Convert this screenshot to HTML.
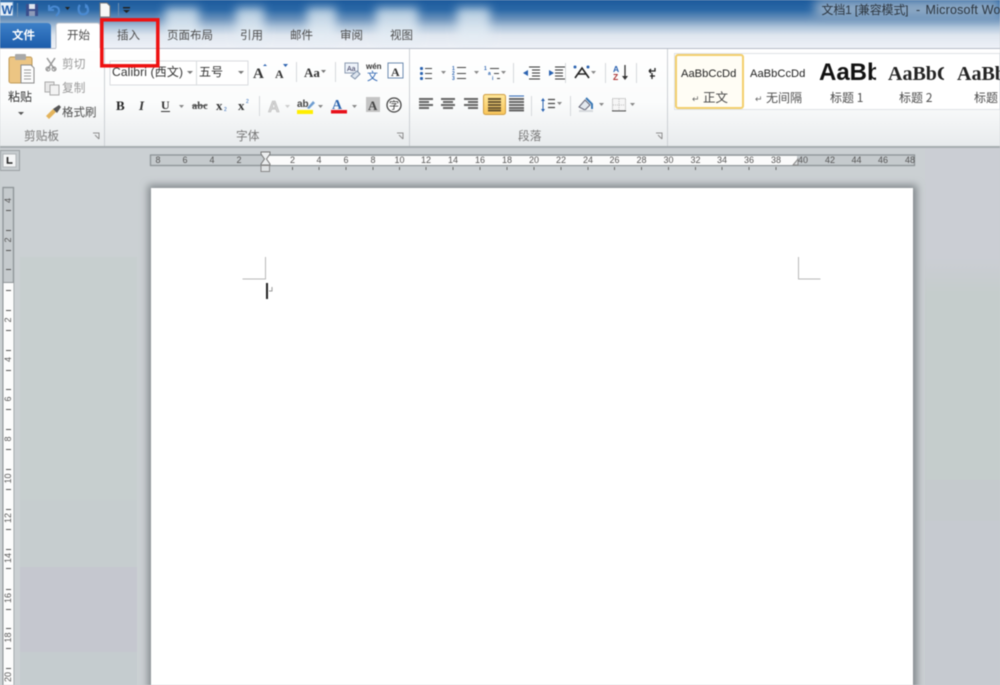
<!DOCTYPE html>
<html><head><meta charset="utf-8"><style>
html,body{margin:0;padding:0;background:#c9ced1}
svg{display:block}
#root{filter:blur(.4px)}
text{font-family:"Liberation Sans","Noto Sans CJK SC",sans-serif}
.s{font-family:"Noto Sans CJK SC","Liberation Sans",sans-serif;font-size:11.5px;fill:#4d4d4d}
.g{font-family:"Noto Sans CJK SC","Liberation Sans",sans-serif;font-size:11.7px;fill:#777}
.r{font-size:9px;fill:#555;text-anchor:middle}
</style></head><body>
<svg id="root" xmlns="http://www.w3.org/2000/svg" width="1000" height="685" viewBox="0 0 1000 685">
<defs>
<linearGradient id="top" x1="0" y1="0" x2="0" y2="1"><stop offset="0" stop-color="#1c5a9c"/><stop offset=".2" stop-color="#2b68a6"/><stop offset=".4" stop-color="#6f95bd"/><stop offset=".55" stop-color="#aec4da"/><stop offset=".72" stop-color="#dfe6ef"/><stop offset="1" stop-color="#eff2f8"/></linearGradient>
<linearGradient id="blob" x1="0" y1="0" x2="0" y2="1"><stop offset="0" stop-color="#b9d0e2"/><stop offset=".6" stop-color="#dfe9f2"/><stop offset="1" stop-color="#eaf0f6"/></linearGradient>
<linearGradient id="rib" x1="0" y1="0" x2="0" y2="1"><stop offset="0" stop-color="#fff"/><stop offset=".55" stop-color="#fbfcfc"/><stop offset="1" stop-color="#e8ebed"/></linearGradient>
<linearGradient id="file" x1="0" y1="0" x2="0" y2="1"><stop offset="0" stop-color="#3d80c8"/><stop offset="1" stop-color="#1c5cab"/></linearGradient>
<linearGradient id="act" x1="0" y1="0" x2="0" y2="1"><stop offset="0" stop-color="#ffe79a"/><stop offset="1" stop-color="#f9c65a"/></linearGradient>
<linearGradient id="trans" x1="0" y1="0" x2="0" y2="1"><stop offset="0" stop-color="#cbced4"/><stop offset="1" stop-color="#c5cdcc"/></linearGradient>
<filter id="b" x="-50%" y="-50%" width="200%" height="200%"><feGaussianBlur stdDeviation="5"/></filter>
<filter id="b2" x="-50%" y="-50%" width="200%" height="200%"><feGaussianBlur stdDeviation="5"/></filter>
<filter id="sh" x="-5%" y="-5%" width="110%" height="110%"><feGaussianBlur stdDeviation="4"/></filter>
</defs>

<!-- title area -->
<rect width="1000" height="49" fill="url(#top)"/>
<g filter="url(#b)" fill="url(#blob)" opacity=".95">
<rect x="165" y="8" width="34" height="36"/><rect x="236" y="8" width="28" height="36"/><rect x="307" y="8" width="29" height="36"/><rect x="376" y="8" width="42" height="36"/><rect x="457" y="8" width="33" height="36"/>
</g>
<rect x="815" y="0" width="185" height="18" fill="#8ea9c4" filter="url(#b2)"/>
<text x="821.500" y="14" font-size="12" fill="#2c3640" textLength="87" style="font-family:'Liberation Sans','Noto Sans CJK SC',sans-serif">文档1 [兼容模式]</text>
<text x="916" y="14" font-size="12.500" fill="#2c3640">-</text>
<text x="925.500" y="14" font-size="12.500" fill="#2c3640" textLength="75">Microsoft Wo</text>

<!-- QAT -->
<rect x="0" y="2" width="13" height="14" fill="#eaf1f8" stroke="#5c8fc4"/>
<text x="1.500" y="14" font-size="12" font-weight="bold" fill="#1d5aa8">W</text>
<rect x="17" y="3" width="1" height="14" fill="#6f8fb0"/>
<rect x="26" y="4" width="12" height="12" fill="#3b4f8c"/><rect x="29" y="4" width="6" height="5" fill="#dfe6f0"/><rect x="29" y="11" width="6" height="5" fill="#8d9ab8"/>
<path d="M49 5v5h5M50 9c3-4 9-3 9 2 0 2-1 3-3 5" fill="none" stroke="#4a8ad2" stroke-width="2"/>
<path d="M65 7h5l-2.500 3z" fill="#222"/>
<path d="M80 5c-2 2-2 7 1 9 3 1 6 0 7-3 0-3-1-5-2-6" fill="none" stroke="#4a8ad2" stroke-width="2.200"/><path d="M85 3v5h3z" fill="#4a8ad2"/>
<path d="M100 3h7l3 3v11h-10z" fill="#f8f8f6" stroke="#777"/>
<rect x="118" y="3" width="1" height="13" fill="#6f8fb0"/>
<rect x="123" y="7" width="7" height="1.500" fill="#222"/><path d="M123 10h7l-3.500 3z" fill="#222"/>

<!-- ribbon -->
<rect x="0" y="48" width="1000" height="98" fill="url(#rib)"/>
<rect x="0" y="48" width="1000" height="1" fill="#b7bcc8"/>
<rect x="0" y="146" width="1000" height="2" fill="#a7adb0"/>
<rect x="104" y="49" width="1" height="97" fill="#ccd0d4"/>
<rect x="409" y="49" width="1" height="97" fill="#ccd0d4"/>
<rect x="667" y="49" width="1" height="97" fill="#ccd0d4"/>

<!-- tabs -->
<path d="M0 23h47q4 0 4 4v21H0z" fill="url(#file)"/>
<text x="12" y="39" font-size="11.500" fill="#fff" font-weight="bold" style="font-family:'Noto Sans CJK SC',sans-serif">文件</text>
<path d="M56 49V26q0-3 3-3h38q3 0 3 3v23z" fill="#fff"/>
<path d="M56 48V26q0-3 3-3h38q3 0 3 3v22" fill="none" stroke="#bcc3cc"/>
<text x="67" y="39" class="s">开始</text>
<text x="117" y="39" class="s">插入</text>
<text x="167" y="39" class="s">页面布局</text>
<text x="240" y="39" class="s">引用</text>
<text x="290" y="39" class="s">邮件</text>
<text x="340" y="39" class="s">审阅</text>
<text x="390" y="39" class="s">视图</text>

<!-- clipboard -->
<rect x="9" y="57" width="23" height="26" rx="2" fill="#ecc583" stroke="#c09a58"/>
<rect x="15" y="54" width="11" height="6" rx="1" fill="#a8a8a8"/>
<path d="M21 65h10l3 3v15H21z" fill="#fdfdfd" stroke="#8a8a8a"/>
<path d="M24 70h7M24 73h7M24 76h7M24 79h7" stroke="#999"/>
<text x="8" y="101" class="s" style="font-size:12px;fill:#333">粘贴</text>
<path d="M18 112h6l-3 3z" fill="#555"/>
<path d="M47 58l8 12M55 58l-8 12" stroke="#999" stroke-width="1.500" fill="none"/><circle cx="48" cy="69" r="2" fill="none" stroke="#888"/><circle cx="54" cy="69" r="2" fill="none" stroke="#888"/>
<text x="62" y="68" class="g" style="fill:#9a9a9a">剪切</text>
<rect x="45" y="82" width="9" height="10" fill="#e8e8e8" stroke="#aaa"/><rect x="50" y="85" width="9" height="10" fill="#f3f3f3" stroke="#aaa"/>
<text x="62" y="92" class="g" style="fill:#9a9a9a">复制</text>
<path d="M46 116l7-7 3 3-7 7z" fill="#e3b45c"/><path d="M53 109l6-4 2 2-4 6z" fill="#555"/>
<text x="62" y="116" class="s">格式刷</text>
<text x="24" y="140" class="g">剪贴板</text>
<path d="M93 133h6v6M95 135l4 4" fill="none" stroke="#8e8e8e"/>

<!-- font group -->
<rect x="110" y="61" width="138" height="24" fill="#fff" stroke="#d9dcdf"/>
<rect x="196" y="61" width="1" height="24" fill="#d9dcdf"/>
<text x="112" y="76" font-size="12" fill="#333" textLength="71">Calibri (西文)</text>
<path d="M187 71h6l-3 3z" fill="#777"/>
<text x="199" y="76" font-size="12" fill="#333" style="font-family:'Noto Sans CJK SC',sans-serif">五号</text>
<path d="M238 71h6l-3 3z" fill="#777"/>
<text x="253" y="78" font-size="15" font-weight="bold" fill="#333" style="font-family:'Liberation Serif',serif">A</text><path d="M263 66l2-2 2 2z" fill="#2a62b0"/>
<text x="275" y="78" font-size="12" font-weight="bold" fill="#333" style="font-family:'Liberation Serif',serif">A</text><path d="M283 64h5l-2.500 3z" fill="#2a62b0"/>
<rect x="296" y="62" width="1" height="20" fill="#d6d9dc"/>
<text x="304" y="77" font-size="13" font-weight="bold" fill="#333" style="font-family:'Liberation Serif',serif">Aa</text><path d="M321 70h5l-2.500 3z" fill="#777"/>
<rect x="335" y="62" width="1" height="20" fill="#d6d9dc"/>
<text x="116" y="110" font-size="13" font-weight="bold" fill="#222" style="font-family:'Liberation Serif',serif">B</text>
<text x="139" y="110" font-size="13" font-weight="bold" font-style="italic" fill="#333" style="font-family:'Liberation Serif',serif">I</text>
<text x="161" y="109" font-size="12" font-weight="bold" fill="#333" style="font-family:'Liberation Serif',serif">U</text><rect x="161" y="111" width="9" height="1" fill="#333"/>
<path d="M179 105h5l-2.500 3z" fill="#888"/>
<text x="192" y="109" font-size="10.500" font-weight="bold" fill="#444" style="font-family:'Liberation Serif',serif">abc</text><rect x="192" y="105" width="15" height="1" fill="#555"/>
<text x="216" y="110" font-size="13" font-weight="bold" fill="#333" style="font-family:'Liberation Serif',serif">x</text><text x="224" y="111" font-size="5" fill="#2a62b0">2</text>
<text x="238" y="110" font-size="13" font-weight="bold" fill="#333" style="font-family:'Liberation Serif',serif">x</text><text x="246" y="103" font-size="5" fill="#2a62b0">2</text>
<rect x="259" y="96" width="1" height="20" fill="#d6d9dc"/>
<text x="268" y="112" font-size="16" font-weight="bold" fill="#d6d6d6" stroke="#bbb" stroke-width=".6">A</text><path d="M285 105h5l-2.500 3z" fill="#ccc"/>
<text x="297" y="107" font-size="10" font-weight="bold" fill="#444">ab</text><path d="M307 108l6-7 2 2-6 6z" fill="#6f9dd0"/>
<rect x="297" y="110" width="16" height="4" fill="#ffee00"/>
<path d="M318 105h5l-2.500 3z" fill="#888"/>
<text x="332" y="109" font-size="14" font-weight="bold" fill="#2b63ad" style="font-family:'Liberation Serif',serif">A</text>
<rect x="331" y="110" width="16" height="3.500" fill="#e8101a"/>
<path d="M352 105h5l-2.500 3z" fill="#888"/>
<rect x="366" y="97" width="14" height="15" fill="#c4c4c4"/>
<text x="368" y="110" font-size="13" font-weight="bold" fill="#444" style="font-family:'Liberation Serif',serif">A</text>
<circle cx="394" cy="105" r="7" fill="#fff" stroke="#444" stroke-width="1.300"/>
<text x="389" y="109" font-size="10" fill="#333" style="font-family:'Noto Sans CJK SC',sans-serif">字</text>
<rect x="345" y="63" width="13" height="10" fill="#eef3fa" stroke="#8a9ab0"/><text x="347" y="71" font-size="7" fill="#335">Aa</text><path d="M351 76l6-5 3 3-5 5z" fill="#dfe6ef" stroke="#7b8ea8"/>
<text x="366" y="69" font-size="8" font-weight="bold" fill="#333">wén</text>
<text x="367" y="80" font-size="11" fill="#2a62b0" style="font-family:'Noto Sans CJK SC',sans-serif">文</text>
<rect x="388" y="63" width="15" height="15" fill="#fff" stroke="#6d8bb0"/>
<text x="391" y="76" font-size="12" font-weight="bold" fill="#333" style="font-family:'Liberation Serif',serif">A</text>
<text x="236" y="140" class="g">字体</text>
<path d="M397 133h6v6M399 135l4 4" fill="none" stroke="#8e8e8e"/>

<!-- paragraph -->
<g fill="#2a62b0"><rect x="420" y="67" width="3" height="3" rx="1"/><rect x="420" y="72" width="3" height="3" rx="1"/><rect x="420" y="77" width="3" height="3" rx="1"/></g>
<path d="M425 68.500h7M425 73.500h7M425 78.500h7" stroke="#444"/><path d="M441 71h5l-2.500 3z" fill="#888"/>
<text x="452" y="70" font-size="5" fill="#2a62b0" font-weight="bold">1</text><text x="452" y="75" font-size="5" fill="#2a62b0" font-weight="bold">2</text><text x="452" y="80" font-size="5" fill="#2a62b0" font-weight="bold">3</text>
<path d="M457 67.500h9M457 73.500h9M457 78.500h9" stroke="#444"/><path d="M474 71h5l-2.500 3z" fill="#888"/>
<text x="484" y="70" font-size="5" fill="#2a62b0" font-weight="bold">1</text><text x="488" y="75" font-size="5" fill="#2a62b0" font-weight="bold">a</text><text x="492" y="80" font-size="5" fill="#2a62b0" font-weight="bold">i</text>
<path d="M490 68.500h9M494 73.500h5M497 78.500h3" stroke="#444"/><path d="M501 71h5l-2.500 3z" fill="#888"/>
<rect x="513" y="63" width="1" height="20" fill="#d6d9dc"/>
<path d="M529 67h11M532 70h8M532 73h8M532 76h8M529 79h11" stroke="#333"/><path d="M523 73l5-3v6z" fill="#2a62b0"/>
<path d="M551 67h11M551 70h8M551 73h8M551 76h8M551 79h11" stroke="#333" transform="translate(4)"/><path d="M549 70l5 3-5 3z" fill="#2a62b0"/>
<rect x="565" y="63" width="1" height="20" fill="#d6d9dc"/>
<path d="M575 78l7-10 7 10M578 74h8" fill="none" stroke="#222" stroke-width="1.600"/><circle cx="575" cy="67" r="1.500" fill="#2a62b0"/><circle cx="588" cy="67" r="1.500" fill="#2a62b0"/>
<path d="M591 71h5l-2.500 3z" fill="#888"/>
<rect x="605" y="63" width="1" height="20" fill="#d6d9dc"/>
<text x="613" y="72" font-size="8.500" font-weight="bold" fill="#2a62b0">A</text><text x="613" y="80" font-size="8.500" font-weight="bold" fill="#a33">Z</text>
<path d="M625 65v13" stroke="#333" stroke-width="1.300"/><path d="M622 76h6l-3 4z" fill="#333"/>
<rect x="636" y="63" width="1" height="20" fill="#d6d9dc"/>
<path d="M655 68v3h-6M649 71l2-2M649 71l2 2M652 73v6M650 76h5" fill="none" stroke="#222" stroke-width="1.300"/>
<!-- align -->
<path d="M419 99h14M419 102h10M419 105h14M419 108h10" stroke="#666" stroke-width="2"/>
<path d="M441 99h14M443 102h10M441 105h14M443 108h10" stroke="#666" stroke-width="2"/>
<path d="M464 99h14M468 102h10M464 105h14M468 108h10" stroke="#666" stroke-width="2"/>
<rect x="483.500" y="94.500" width="22" height="20" rx="2" fill="url(#act)" stroke="#d09d40"/>
<path d="M488 99h13M488 102h13M488 105h13M488 108h13M488 110.500h13" stroke="#6a5630" stroke-width="2"/>
<path d="M509 99h15M509 102h15M509 105h15M509 108h15M509 110.500h15" stroke="#666" stroke-width="2"/>
<path d="M509 96h15" stroke="#2a62b0"/>
<rect x="531" y="96" width="1" height="20" fill="#d6d9dc"/>
<path d="M543 98l-2 3h4zM543 112l-2-3h4z" fill="#2a62b0"/><path d="M543 100v10" stroke="#2a62b0"/>
<path d="M548 99.500h7M548 103.500h7M548 107.500h7" stroke="#444" stroke-width="1.300"/><path d="M557 102h5l-2.500 3z" fill="#888"/>
<rect x="570" y="96" width="1" height="20" fill="#d6d9dc"/>
<path d="M579 107l6-7 5 5-5 5z" fill="#e3e8ee" stroke="#667"/><path d="M586 98l6 6v5" fill="none" stroke="#3a78b5" stroke-width="2"/><rect x="579" y="110" width="14" height="2" fill="#d5d8dc"/>
<path d="M599 103h5l-2.500 3z" fill="#888"/>
<rect x="612.500" y="98.500" width="13" height="12" fill="#f6f6f6" stroke="#a5a5a5" stroke-dasharray="1 1"/><path d="M619 99v11M613 105h12" stroke="#c0c0c0" stroke-dasharray="1 1"/><path d="M612 111h14" stroke="#555"/>
<path d="M630 103h5l-2.500 3z" fill="#888"/>
<text x="518" y="140" class="g">段落</text>
<path d="M656 133h6v6M658 135l4 4" fill="none" stroke="#8e8e8e"/>

<!-- styles -->
<rect x="674.500" y="53.500" width="325.500" height="56" fill="#fff" stroke="#dfe2e6"/>
<rect x="676" y="55" width="67" height="53" rx="2" fill="#fffdf5" stroke="#f3cf6c" stroke-width="2"/>
<text x="681" y="77" font-size="11.200" fill="#222">AaBbCcDd</text>
<text x="750" y="77" font-size="11.200" fill="#222">AaBbCcDd</text>
<text x="692" y="102" font-size="9" fill="#666">↵</text>
<text x="703" y="102" class="s" style="fill:#444;font-size:12.500px">正文</text>
<text x="755" y="102" font-size="9" fill="#666">↵</text>
<text x="766" y="102" class="s" style="font-size:12px">无间隔</text>
<svg x="819" y="55" width="57" height="30"><text x="0" y="25" font-size="24" font-weight="bold" fill="#111">AaBb</text></svg>
<svg x="887" y="55" width="57" height="30"><text x="1" y="25" font-size="20" font-weight="bold" fill="#222" style="font-family:'Liberation Serif',serif">AaBbC</text></svg>
<svg x="956" y="55" width="44" height="30"><text x="1" y="25" font-size="20" font-weight="bold" fill="#222" style="font-family:'Liberation Serif',serif">AaBb</text></svg>
<text x="830" y="102" class="s" style="font-size:12px">标题 1</text>
<text x="899" y="102" class="s" style="font-size:12px">标题 2</text>
<text x="974" y="102" class="s" style="font-size:12px">标题</text>

<!-- workspace -->
<rect x="0" y="148" width="1000" height="537" fill="#cbd0d3"/>
<rect x="20" y="257" width="117" height="243" fill="#c7cfcf"/>
<rect x="20" y="500" width="117" height="67" fill="#c6cdcf"/>
<rect x="20" y="567" width="117" height="85" fill="#c5c7cf"/>
<rect x="20" y="652" width="117" height="33" fill="#c5cccf"/>
<rect x="925" y="148" width="75" height="110" fill="#cbced4"/>
<rect x="925" y="258" width="75" height="37" fill="url(#trans)"/>
<rect x="925" y="295" width="75" height="185" fill="#c5cdcc"/>
<rect x="925" y="480" width="75" height="41" fill="#c5cacd"/>
<rect x="925" y="521" width="75" height="164" fill="#c6cad0"/>

<!-- tab selector -->
<rect x="0.500" y="150.500" width="19" height="20" fill="#c6cbce" stroke="#9aa0a3"/>
<rect x="3" y="154" width="13" height="13" fill="#f5f6f7" stroke="#b0b5b8"/>
<path d="M7.500 157v6h5" fill="none" stroke="#222" stroke-width="1.600"/>

<!-- page -->
<rect x="148" y="185" width="769" height="520" fill="#80868a" filter="url(#sh)"/>
<rect x="151" y="188" width="762" height="497" fill="#fff"/>
<path d="M265.500 257v22h-23M798.500 257v22h22" fill="none" stroke="#b8b8b8"/>
<rect x="266" y="283" width="2" height="16" fill="#222"/>
<path d="M272 287v4h-3" fill="none" stroke="#999"/>

<!-- horizontal ruler -->
<rect x="150.500" y="155" width="764" height="10.500" fill="#c5cacd" stroke="#8e9497" stroke-width="1.300"/>
<rect x="266" y="156" width="531" height="9" fill="#fbfbfb"/>
<text class="r" x="158" y="163">8</text><text class="r" x="185" y="163">6</text><text class="r" x="212" y="163">4</text><text class="r" x="239" y="163">2</text>
<text class="r" x="292.500" y="163">2</text><text class="r" x="319" y="163">4</text><text class="r" x="346" y="163">6</text><text class="r" x="373" y="163">8</text>
<text class="r" x="399.500" y="163">10</text><text class="r" x="426" y="163">12</text><text class="r" x="453" y="163">14</text><text class="r" x="480" y="163">16</text><text class="r" x="507" y="163">18</text>
<text class="r" x="534" y="163">20</text><text class="r" x="561" y="163">22</text><text class="r" x="588" y="163">24</text><text class="r" x="614.500" y="163">26</text><text class="r" x="641.500" y="163">28</text>
<text class="r" x="668.500" y="163">30</text><text class="r" x="695.500" y="163">32</text><text class="r" x="722" y="163">34</text><text class="r" x="749" y="163">36</text><text class="r" x="776" y="163">38</text>
<text class="r" x="803" y="163">40</text><text class="r" x="830" y="163">42</text><text class="r" x="856.500" y="163">44</text><text class="r" x="883" y="163">46</text><text class="r" x="910" y="163">48</text>
<path d="M292.500 167v3M319 167v3M346 167v3M373 167v3M399.500 167v3M426 167v3M453 167v3M480 167v3M507 167v3M534 167v3M561 167v3M588 167v3M614.500 167v3M641.500 167v3M668.500 167v3M695.500 167v3M722 167v3M749 167v3M776 167v3" stroke="#666"/>
<path d="M261 152h9v2l-3.500 5 3.500 5v1h-9v-1l3.500-5-3.500-5z" fill="#eceeef" stroke="#777"/>
<rect x="261" y="165.500" width="8.500" height="6" fill="#dfe2e3" stroke="#888"/>
<path d="M793 165l5-6v6z" fill="#dcdfe0" stroke="#888"/>

<!-- vertical ruler -->
<rect x="3" y="187.500" width="10.500" height="497.500" fill="#c5cacd" stroke="#8e9497" stroke-width="1.300"/>
<rect x="3.500" y="283" width="10" height="402" fill="#fcfcfc"/>
<path d="M3 282.500h10.500" stroke="#8e9497"/>
<path d="M6 210.500h5M6 230.500h5M6 250.500h5M6 269.500h5M6 290.500h5M6 310.500h5M6 330.500h5M6 350.500h5M6 370.500h5M6 389.500h5M6 409.500h5M6 429.500h5M6 449.500h5M6 469.500h5M6 489.500h5M6 509.500h5M6 529.500h5M6 549.500h5M6 568.500h5M6 589.500h5M6 609.500h5M6 628.500h5M6 648.500h5M6 668.500h5" stroke="#555"/>
<text class="r" transform="translate(11 200.500) rotate(-90)">4</text>
<text class="r" transform="translate(11 240) rotate(-90)">2</text>
<text class="r" transform="translate(11 320) rotate(-90)">2</text>
<text class="r" transform="translate(11 359.500) rotate(-90)">4</text>
<text class="r" transform="translate(11 399) rotate(-90)">6</text>
<text class="r" transform="translate(11 439) rotate(-90)">8</text>
<text class="r" transform="translate(11 478.500) rotate(-90)">10</text>
<text class="r" transform="translate(11 518) rotate(-90)">12</text>
<text class="r" transform="translate(11 558) rotate(-90)">14</text>
<text class="r" transform="translate(11 598) rotate(-90)">16</text>
<text class="r" transform="translate(11 637.500) rotate(-90)">18</text>
<text class="r" transform="translate(11 677) rotate(-90)">20</text>

<!-- red highlight -->
<rect x="101.800" y="19.800" width="56" height="46" fill="none" stroke="#ee1111" stroke-width="3.500"/>
</svg>
</body></html>
